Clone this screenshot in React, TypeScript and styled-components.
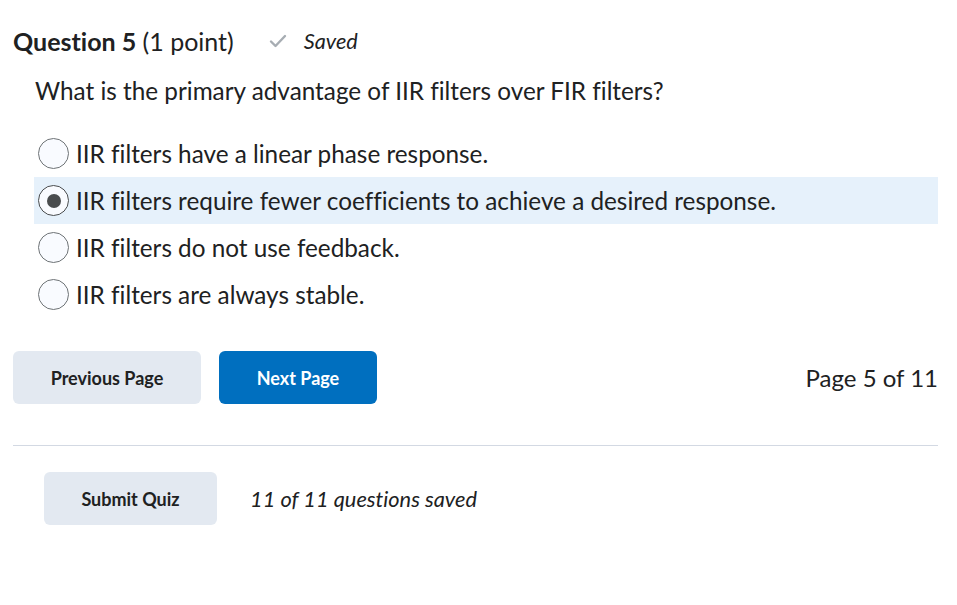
import React, { useState } from "react";
import styled, { createGlobalStyle } from "styled-components";

const GlobalStyle = createGlobalStyle`
  body {
    margin: 0;
    background: #ffffff;
    font-family: Lato, "Noto Sans", sans-serif;
    font-variant-ligatures: none;
    color: #202122;
  }
`;

const options = [
  "IIR filters have a linear phase response.",
  "IIR filters require fewer coefficients to achieve a desired response.",
  "IIR filters do not use feedback.",
  "IIR filters are always stable.",
];

const App: React.FC = () => {
  const [selected, setSelected] = useState<number>(1);

  return (
    <>
      <GlobalStyle />
      <Page>
        <Header>
          <Title>
            <strong>Question 5</strong> (1 point)
          </Title>
          <SavedTag>
            <svg width="18" height="14" viewBox="0 0 18 14">
              <path
                d="M2 7.5 L6.5 12 L16 2"
                fill="none"
                stroke="#a7adb3"
                strokeWidth="2.4"
                strokeLinecap="round"
                strokeLinejoin="round"
              />
            </svg>
            <span>Saved</span>
          </SavedTag>
        </Header>

        <QuestionText>
          What is the primary advantage of IIR filters over FIR filters?
        </QuestionText>

        <OptionList>
          {options.map((text, index) => (
            <OptionRow
              key={index}
              $active={selected === index}
              onClick={() => setSelected(index)}
            >
              <Radio $checked={selected === index} />
              <OptionLabel>{text}</OptionLabel>
            </OptionRow>
          ))}
        </OptionList>

        <NavRow>
          <ButtonGroup>
            <Button $width={188}>Previous Page</Button>
            <Button $width={158} $primary>
              Next Page
            </Button>
          </ButtonGroup>
          <PageCount>Page 5 of 11</PageCount>
        </NavRow>

        <Divider />

        <SubmitRow>
          <Button $width={173}>Submit Quiz</Button>
          <SavedCount>11 of 11 questions saved</SavedCount>
        </SubmitRow>
      </Page>
    </>
  );
};

export default App;

const Page = styled.div`
  display: flex;
  flex-direction: column;
  width: 925px;
  padding: 26px 19px 0 13px;
`;

const Header = styled.div`
  display: flex;
  align-items: center;
  gap: 35px;
  height: 30px;
`;

const Title = styled.h2`
  margin: 0;
  font-size: 25px;
  font-weight: 400;
  color: #202122;

  strong {
    font-weight: 700;
  }
`;

const SavedTag = styled.div`
  display: flex;
  align-items: center;
  gap: 17px;
  font-size: 21.7px;
  font-style: italic;
  color: #202122;
`;

const QuestionText = styled.p`
  margin: 19px 0 0 22px;
  font-size: 24.3px;
  line-height: 32px;
`;

const OptionList = styled.div`
  display: flex;
  flex-direction: column;
  margin: 23px 0 0 21px;
`;

const OptionRow = styled.label<{ $active: boolean }>`
  display: flex;
  align-items: center;
  gap: 7px;
  height: 47px;
  padding-left: 4px;
  background: ${({ $active }) => ($active ? "#e6f1fb" : "transparent")};
  cursor: pointer;
`;

const Radio = styled.span<{ $checked: boolean }>`
  position: relative;
  flex-shrink: 0;
  box-sizing: border-box;
  width: 31px;
  height: 31px;
  border-radius: 50%;
  border: 1px solid ${({ $checked }) => ($checked ? "#494c4e" : "#6e7376")};
  background: #f9fbff;

  &::after {
    content: "";
    display: ${({ $checked }) => ($checked ? "block" : "none")};
    position: absolute;
    left: 50%;
    top: 50%;
    width: 14px;
    height: 14px;
    margin: -7px 0 0 -7px;
    border-radius: 50%;
    background: #494c4e;
  }
`;

const OptionLabel = styled.span`
  font-size: 24.3px;
  color: #202122;
`;

const NavRow = styled.div`
  display: flex;
  align-items: center;
  justify-content: space-between;
  margin-top: 33px;
`;

const ButtonGroup = styled.div`
  display: flex;
  gap: 18px;
`;

const Button = styled.button<{ $width: number; $primary?: boolean }>`
  width: ${({ $width }) => $width}px;
  height: 53px;
  border: none;
  border-radius: 6px;
  font-family: Lato, "Noto Sans", sans-serif;
  font-size: 18px;
  font-weight: 700;
  color: ${({ $primary }) => ($primary ? "#ffffff" : "#202122")};
  background: ${({ $primary }) => ($primary ? "#006fbf" : "#e3e9f1")};
  cursor: pointer;
`;

const PageCount = styled.span`
  font-size: 24px;
  color: #202122;
`;

const Divider = styled.hr`
  width: 100%;
  margin: 41px 0 0;
  border: none;
  border-top: 1px solid #d3d9e3;
`;

const SubmitRow = styled.div`
  display: flex;
  align-items: center;
  gap: 33px;
  margin: 26px 0 0 31px;
`;

const SavedCount = styled.span`
  font-size: 21.8px;
  font-style: italic;
  color: #202122;
`;
